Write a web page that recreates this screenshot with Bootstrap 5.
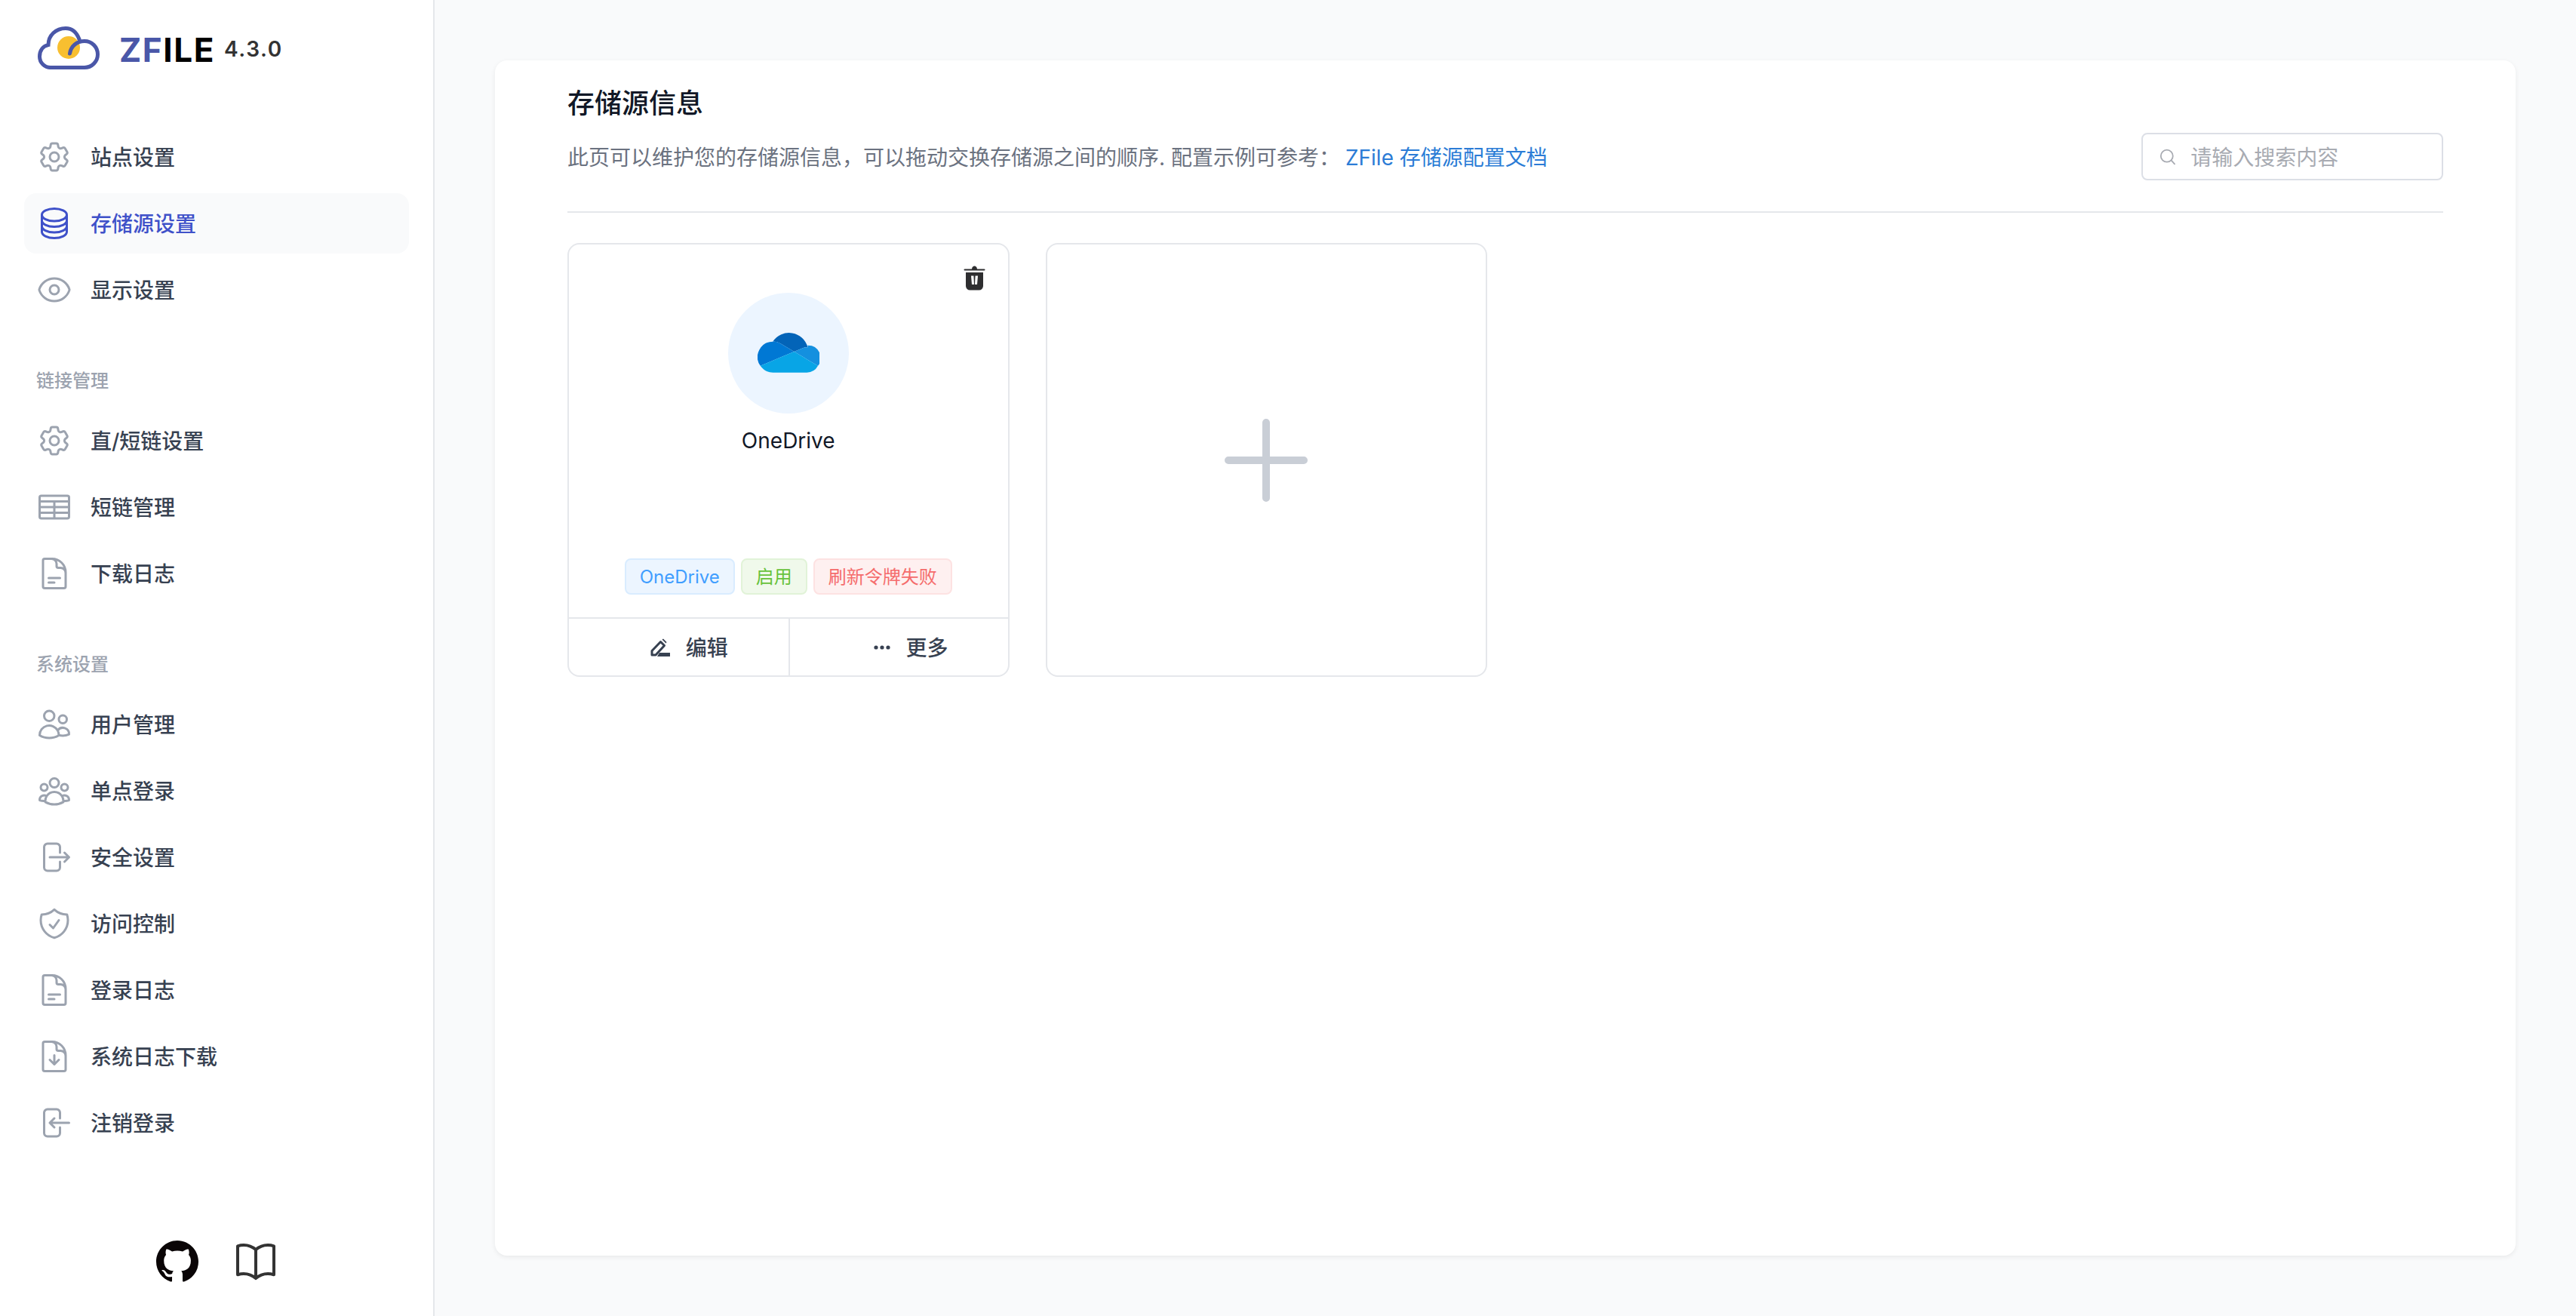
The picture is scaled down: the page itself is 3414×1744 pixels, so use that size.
<!DOCTYPE html>
<html lang="zh-CN">
<head>
<meta charset="utf-8">
<title>ZFile</title>
<link href="https://cdn.jsdelivr.net/npm/bootstrap@5.3.0/dist/css/bootstrap.min.css" rel="stylesheet">
<style>
html,body{height:100%;}
body{font-family:Inter,"Noto Sans CJK SC",sans-serif;background:#f9fafb;color:#111827;overflow:hidden;}
.app-shell{height:1744px;}
.side{width:576px;flex:none;background:#fff;border-right:2px solid #e5e7eb;padding:0 32px;}
.brand{height:168px;padding:35px 0 0 18px;align-items:flex-start;}
.brand-name{font-size:44px;font-weight:700;line-height:44px;letter-spacing:1.6px;color:#000;margin:9px 0 0 26px;}
.brand-name b{color:#4a57a8;font-weight:700;}
.brand-ver{font-size:28px;font-weight:600;line-height:44px;letter-spacing:1.6px;color:#333;margin:8px 0 0 12px;}
.menu-item{height:80px;margin-bottom:8px;padding:0 0 0 16px;gap:24px;border-radius:16px;font-size:28px;font-weight:500;color:#374151;text-decoration:none;}
.menu-item span{padding-top:2px;}
.menu-item svg{width:48px;height:48px;flex:none;color:#9ca3af;}
.menu-item.on{background:#f9fafb;color:#3f51c9;}
.menu-item.on svg{color:#3f51c9;}
.ico{fill:none;stroke:currentColor;stroke-width:1.5;stroke-linecap:round;stroke-linejoin:round;}
.group-label{height:40px;line-height:40px;margin:53px 0 19px;padding-left:16px;font-size:24px;font-weight:500;color:#9ca3af;}
.side-foot{margin-top:auto;height:64px;margin-bottom:40px;gap:44px;padding-left:4px;}
.book{width:64px;height:64px;color:#333;}
.panel-wrap{padding:80px;min-width:0;}
.panel{height:100%;background:#fff;border-radius:16px;box-shadow:0 2px 6px rgba(0,0,0,.07);padding:28px 96px 0;}
.head-row{padding-bottom:41px;border-bottom:2px solid #e5e7eb;margin-bottom:40px;}
.title{font-size:36px;font-weight:500;line-height:56px;margin:0 0 12px;padding-top:1px;height:56px;color:#111827;}
.sub-row{height:63px;font-size:28px;color:#6b7280;padding-top:2px;}
.doc-link{color:#2b7cd6;text-decoration:none;margin-left:7px;}
.search-box{position:absolute;right:0;top:68px;width:400px;height:63px;border:2px solid #dcdfe6;border-radius:8px;padding-left:22px;gap:20px;background:#fff;}
.search-box input{border:0;padding:2px 0 0;font-size:28px;color:#606266;box-shadow:none;background:transparent;}
.search-box input::placeholder{color:#a8abb2;}
.store-row{--bs-gutter-x:48px;}
.store{height:575px;border:2px solid #e5e7eb;border-radius:16px;background:#fff;--bs-card-bg:#fff;}
.store-del{position:absolute;top:28px;right:30px;width:29px;height:33px;}
.logo-disc{width:160px;height:160px;border-radius:50%;background:#ecf5ff;margin-top:64px;}
.store-name{font-size:28px;font-weight:400;line-height:40px;margin-top:16px;color:#111827;}
.tags{gap:8px;margin-top:auto;margin-bottom:30px;}
.tg{height:48px;line-height:46px;padding:0 18px;font-size:24px;border-width:2px;border-style:solid;border-radius:8px;font-weight:400;white-space:nowrap;}
.tg-blue{color:#409eff;background:#ecf5ff;border-color:#d9ecff;}
.tg-green{color:#67c23a;background:#f0f9eb;border-color:#e1f3d8;}
.tg-red{color:#f56c6c;background:#fef0f0;border-color:#fde2e2;}
.store-foot{height:77px;border-top:2px solid #e5e7eb;}
.act{width:50%;flex:none;gap:21px;font-size:28px;font-weight:500;color:#374151;padding-left:28px;}
.act span{padding-top:2px;}
.act+.act{border-left:2px solid #e5e7eb;padding-left:32px;}
.plus{position:relative;width:110px;height:110px;}
.plus svg{width:110px;height:110px;display:block;}
</style>
</head>
<body>
<div class="d-flex app-shell">
  <aside class="side d-flex flex-column">
    <div class="brand d-flex">
      <svg width="82" height="57" viewBox="0 0 82 57" fill="none"><circle cx="41" cy="28" r="15" fill="#f8bf30"/><path d="M17 54.5H62A17.5 17.5 0 0 0 79.5 37 17.5 17.5 0 0 0 62 19.5C52 19.5 44 26 42.5 36" stroke="#4a57a8" stroke-width="5" stroke-linecap="round"/><path d="M17 54.5A14.5 14.5 0 0 1 2.5 40C2.5 32 7 26 14 24.5 14 12 24 2.5 37 2.5 46 2.5 52 9 55 17" stroke="#4a57a8" stroke-width="5" stroke-linecap="round"/></svg>
      <span class="brand-name"><b>ZF</b>ILE</span>
      <span class="brand-ver">4.3.0</span>
    </div>
    <nav class="d-flex flex-column">
      <a class="menu-item d-flex align-items-center" href="#"><svg viewBox="0 0 24 24" class="ico"><path d="M9.594 3.94c.09-.542.56-.94 1.11-.94h2.593c.55 0 1.02.398 1.11.94l.213 1.281c.063.374.313.686.645.87.074.04.147.083.22.127.324.196.72.257 1.075.124l1.217-.456a1.125 1.125 0 011.37.49l1.296 2.247a1.125 1.125 0 01-.26 1.431l-1.003.827c-.293.24-.438.613-.431.992a6.759 6.759 0 010 .255c-.007.378.138.75.43.99l1.005.828c.424.35.534.954.26 1.43l-1.298 2.247a1.125 1.125 0 01-1.369.491l-1.217-.456c-.355-.133-.75-.072-1.076.124a6.57 6.57 0 01-.22.128c-.331.183-.581.495-.644.869l-.213 1.28c-.09.543-.56.941-1.11.941h-2.594c-.55 0-1.02-.398-1.11-.94l-.213-1.281c-.062-.374-.312-.686-.644-.87a6.52 6.52 0 01-.22-.127c-.325-.196-.72-.257-1.076-.124l-1.217.456a1.125 1.125 0 01-1.369-.49l-1.297-2.247a1.125 1.125 0 01.26-1.431l1.004-.827c.292-.24.437-.613.43-.992a6.932 6.932 0 010-.255c.007-.378-.138-.75-.43-.99l-1.004-.828a1.125 1.125 0 01-.26-1.43l1.297-2.247a1.125 1.125 0 011.37-.491l1.216.456c.356.133.751.072 1.076-.124.072-.044.146-.087.22-.128.332-.183.582-.495.644-.869l.214-1.281z"/><path d="M15 12a3 3 0 11-6 0 3 3 0 016 0z"/></svg><span>站点设置</span></a>
      <a class="menu-item on d-flex align-items-center" href="#"><svg viewBox="0 0 24 24" class="ico"><path d="M20.25 6.375c0 2.278-3.694 4.125-8.25 4.125S3.75 8.653 3.75 6.375m16.5 0c0-2.278-3.694-4.125-8.25-4.125S3.75 4.097 3.75 6.375m16.5 0v11.25c0 2.278-3.694 4.125-8.25 4.125s-8.25-1.847-8.25-4.125V6.375m16.5 0v3.75m-16.5-3.75v3.75m16.5 0v3.75C20.25 16.153 16.556 18 12 18s-8.25-1.847-8.25-4.125v-3.75m16.5 0c0 2.278-3.694 4.125-8.25 4.125s-8.25-1.847-8.25-4.125"/></svg><span>存储源设置</span></a>
      <a class="menu-item d-flex align-items-center" href="#"><svg viewBox="0 0 24 24" class="ico"><path d="M2.036 12.322a1.012 1.012 0 010-.639C3.423 7.51 7.36 4.5 12 4.5c4.638 0 8.573 3.007 9.963 7.178.07.207.07.431 0 .639C20.577 16.49 16.64 19.5 12 19.5c-4.638 0-8.573-3.007-9.964-7.178z"/><path d="M15 12a3 3 0 11-6 0 3 3 0 016 0z"/></svg><span>显示设置</span></a>

      <div class="group-label">链接管理</div>
      <a class="menu-item d-flex align-items-center" href="#"><svg viewBox="0 0 24 24" class="ico"><path d="M9.594 3.94c.09-.542.56-.94 1.11-.94h2.593c.55 0 1.02.398 1.11.94l.213 1.281c.063.374.313.686.645.87.074.04.147.083.22.127.324.196.72.257 1.075.124l1.217-.456a1.125 1.125 0 011.37.49l1.296 2.247a1.125 1.125 0 01-.26 1.431l-1.003.827c-.293.24-.438.613-.431.992a6.759 6.759 0 010 .255c-.007.378.138.75.43.99l1.005.828c.424.35.534.954.26 1.43l-1.298 2.247a1.125 1.125 0 01-1.369.491l-1.217-.456c-.355-.133-.75-.072-1.076.124a6.57 6.57 0 01-.22.128c-.331.183-.581.495-.644.869l-.213 1.28c-.09.543-.56.941-1.11.941h-2.594c-.55 0-1.02-.398-1.11-.94l-.213-1.281c-.062-.374-.312-.686-.644-.87a6.52 6.52 0 01-.22-.127c-.325-.196-.72-.257-1.076-.124l-1.217.456a1.125 1.125 0 01-1.369-.49l-1.297-2.247a1.125 1.125 0 01.26-1.431l1.004-.827c.292-.24.437-.613.43-.992a6.932 6.932 0 010-.255c.007-.378-.138-.75-.43-.99l-1.004-.828a1.125 1.125 0 01-.26-1.43l1.297-2.247a1.125 1.125 0 011.37-.491l1.216.456c.356.133.751.072 1.076-.124.072-.044.146-.087.22-.128.332-.183.582-.495.644-.869l.214-1.281z"/><path d="M15 12a3 3 0 11-6 0 3 3 0 016 0z"/></svg><span>直/短链设置</span></a>
      <a class="menu-item d-flex align-items-center" href="#"><svg viewBox="0 0 24 24" class="ico"><path d="M3.375 4.5h17.25c.621 0 1.125.504 1.125 1.125v12.75c0 .621-.504 1.125-1.125 1.125H3.375a1.125 1.125 0 01-1.125-1.125V5.625c0-.621.504-1.125 1.125-1.125zM2.25 8.25h19.5M2.25 12h19.5M2.25 15.75h19.5M12 8.25v11.25"/></svg><span>短链管理</span></a>
      <a class="menu-item d-flex align-items-center" href="#"><svg viewBox="0 0 24 24" class="ico"><path d="M19.5 14.25v-2.625a3.375 3.375 0 00-3.375-3.375h-1.5A1.125 1.125 0 0113.5 7.125v-1.5a3.375 3.375 0 00-3.375-3.375H8.25m0 12.75h7.5m-7.5 3H12M10.5 2.25H5.625c-.621 0-1.125.504-1.125 1.125v17.25c0 .621.504 1.125 1.125 1.125h12.75c.621 0 1.125-.504 1.125-1.125V11.25a9 9 0 00-9-9z"/></svg><span>下载日志</span></a>

      <div class="group-label">系统设置</div>
      <a class="menu-item d-flex align-items-center" href="#"><svg viewBox="0 0 24 24" class="ico"><path d="M15 19.128a9.38 9.38 0 002.625.372 9.337 9.337 0 004.121-.952 4.125 4.125 0 00-7.533-2.493M15 19.128v-.003c0-1.113-.285-2.16-.786-3.07M15 19.128v.106A12.318 12.318 0 018.624 21c-2.331 0-4.512-.645-6.374-1.766l-.001-.109a6.375 6.375 0 0111.964-3.07M12 6.375a3.375 3.375 0 11-6.75 0 3.375 3.375 0 016.75 0zm8.25 2.25a2.625 2.625 0 11-5.25 0 2.625 2.625 0 015.25 0z"/></svg><span>用户管理</span></a>
      <a class="menu-item d-flex align-items-center" href="#"><svg viewBox="0 0 24 24" class="ico"><path d="M18 18.72a9.094 9.094 0 003.741-.479 3 3 0 00-4.682-2.72m.94 3.198l.001.031c0 .225-.012.447-.037.666A11.944 11.944 0 0112 21c-2.17 0-4.207-.576-5.963-1.584A6.062 6.062 0 016 18.719m12 0a5.971 5.971 0 00-.941-3.197m0 0A5.995 5.995 0 0012 12.75a5.995 5.995 0 00-5.058 2.772m0 0a3 3 0 00-4.681 2.72 8.986 8.986 0 003.74.477m.94-3.197a5.971 5.971 0 00-.94 3.197M15 6.75a3 3 0 11-6 0 3 3 0 016 0zm6 3a2.25 2.25 0 11-4.5 0 2.25 2.25 0 014.5 0zm-13.5 0a2.25 2.25 0 11-4.5 0 2.25 2.25 0 014.5 0z"/></svg><span>单点登录</span></a>
      <a class="menu-item d-flex align-items-center" href="#"><svg viewBox="0 0 24 24" class="ico"><path d="M15.75 9V5.25A2.25 2.25 0 0013.5 3h-6a2.25 2.25 0 00-2.25 2.25v13.5A2.25 2.25 0 007.5 21h6a2.25 2.25 0 002.25-2.25V15m3 0l3-3m0 0l-3-3m3 3H9"/></svg><span>安全设置</span></a>
      <a class="menu-item d-flex align-items-center" href="#"><svg viewBox="0 0 24 24" class="ico"><path d="M9 12.75L11.25 15 15 9.75m-3-7.036A11.959 11.959 0 013.598 6 11.99 11.99 0 003 9.749c0 5.592 3.824 10.29 9 11.623 5.176-1.332 9-6.03 9-11.622 0-1.31-.21-2.571-.598-3.751h-.152c-3.196 0-6.1-1.248-8.25-3.285z"/></svg><span>访问控制</span></a>
      <a class="menu-item d-flex align-items-center" href="#"><svg viewBox="0 0 24 24" class="ico"><path d="M19.5 14.25v-2.625a3.375 3.375 0 00-3.375-3.375h-1.5A1.125 1.125 0 0113.5 7.125v-1.5a3.375 3.375 0 00-3.375-3.375H8.25m0 12.75h7.5m-7.5 3H12M10.5 2.25H5.625c-.621 0-1.125.504-1.125 1.125v17.25c0 .621.504 1.125 1.125 1.125h12.75c.621 0 1.125-.504 1.125-1.125V11.25a9 9 0 00-9-9z"/></svg><span>登录日志</span></a>
      <a class="menu-item d-flex align-items-center" href="#"><svg viewBox="0 0 24 24" class="ico"><path d="M19.5 14.25v-2.625a3.375 3.375 0 00-3.375-3.375h-1.5A1.125 1.125 0 0113.5 7.125v-1.5a3.375 3.375 0 00-3.375-3.375H8.25m.75 12l3 3m0 0l3-3m-3 3v-6m-1.5-9H5.625c-.621 0-1.125.504-1.125 1.125v17.25c0 .621.504 1.125 1.125 1.125h12.75c.621 0 1.125-.504 1.125-1.125V11.25a9 9 0 00-9-9z"/></svg><span>系统日志下载</span></a>
      <a class="menu-item d-flex align-items-center" href="#"><svg viewBox="0 0 24 24" class="ico"><path d="M15.75 9V5.25A2.25 2.25 0 0013.5 3h-6a2.25 2.25 0 00-2.25 2.25v13.5A2.25 2.25 0 007.5 21h6a2.25 2.25 0 002.25-2.25V15M12 9l-3 3m0 0l3 3m-3-3h12.75"/></svg><span>注销登录</span></a>
    </nav>
    <div class="side-foot d-flex justify-content-center align-items-center">
      <svg width="56" height="56" viewBox="0 0 16 16" fill="#0a0506"><path d="M8 0C3.58 0 0 3.58 0 8c0 3.54 2.29 6.53 5.47 7.59.4.07.55-.17.55-.38 0-.19-.01-.82-.01-1.49-2.01.37-2.53-.49-2.69-.94-.09-.23-.48-.94-.82-1.13-.28-.15-.68-.52-.01-.53.63-.01 1.08.58 1.23.82.72 1.21 1.87.87 2.33.66.07-.52.28-.87.51-1.07-1.78-.2-3.64-.89-3.64-3.95 0-.87.31-1.59.82-2.15-.08-.2-.36-1.02.08-2.12 0 0 .67-.21 2.2.82.64-.18 1.32-.27 2-.27.68 0 1.36.09 2 .27 1.53-1.04 2.2-.82 2.2-.82.44 1.1.16 1.92.08 2.12.51.56.82 1.27.82 2.15 0 3.07-1.87 3.75-3.65 3.95.29.25.54.73.54 1.48 0 1.07-.01 1.93-.01 2.2 0 .21.15.46.55.38A8.013 8.013 0 0016 8c0-4.42-3.58-8-8-8z"/></svg>
      <svg viewBox="0 0 24 24" class="ico book"><path d="M12 6.042A8.967 8.967 0 006 3.75c-1.052 0-2.062.18-3 .512v14.25A8.987 8.987 0 016 18c2.305 0 4.408.867 6 2.292m0-14.25a8.966 8.966 0 016-2.292c1.052 0 2.062.18 3 .512v14.25A8.987 8.987 0 0018 18a8.967 8.967 0 00-6 2.292m0-14.25v14.25"/></svg>
    </div>
  </aside>

  <main class="panel-wrap flex-grow-1">
    <section class="panel">
      <div class="head-row position-relative">
        <h1 class="title">存储源信息</h1>
        <div class="sub-row d-flex align-items-center"><span>此页可以维护您的存储源信息，可以拖动交换存储源之间的顺序. 配置示例可参考：</span><a class="doc-link" href="#">ZFile 存储源配置文档</a></div>
        <div class="search-box d-flex align-items-center">
          <svg width="24" height="24" viewBox="0 0 24 24" fill="none" stroke="#a8abb2" stroke-width="2" stroke-linecap="round"><circle cx="11" cy="10.500" r="9"/><path d="M17.500 17l5 5.500"/></svg>
          <input class="form-control" type="text" placeholder="请输入搜索内容">
        </div>
      </div>
      <div class="row store-row">
        <div class="col-3">
          <div class="card store position-relative align-items-stretch">
            <svg class="store-del" viewBox="0 0 29 33"><path d="M11 4.500C11.300 1.500 13 .5 14.500 .5S17.700 1.500 18 4.500H27.500a1 1 0 010 2H1.500a1 1 0 010-2z" fill="#2e2e30"/><path fill-rule="evenodd" d="M3 9H26V27a5.500 5.500 0 01-5.500 5.500h-12A5.500 5.500 0 013 27zM10 13.500l1 11.500h3l-.6-11.500zM15.600 13.500L15 25h3l1-11.500z" fill="#2e2e30"/></svg>
            <div class="d-flex flex-column align-items-center flex-grow-1">
              <div class="logo-disc d-flex align-items-center justify-content-center">
                <svg width="82" height="82" viewBox="0 0 32 32"><path d="M12.20245 11.19292l.00031-.0011 6.71765 4.02379 4.00293-1.68451.00018.00068A6.4768 6.4768 0 0 1 25.5 13c.14764 0 .29358.0067.43878.01639a10.00075 10.00075 0 0 0-18.041-3.01381C7.932 10.00215 7.9657 10 8 10a7.96073 7.96073 0 0 1 4.20245 1.19292z" fill="#0364b8"/><path d="M12.20276 11.19182l-.00031.0011A7.96073 7.96073 0 0 0 8 10c-.0343 0-.06805.00215-.10223.00258A7.99676 7.99676 0 0 0 1.43732 22.57277l5.924-2.49292 2.63342-1.10819 5.86353-2.46746 3.06213-1.28859z" fill="#0078d4"/><path d="M25.93878 13.01639C25.79358 13.0067 25.64764 13 25.5 13a6.4768 6.4768 0 0 0-2.57648.53178l-.00018-.00068-4.00293 1.68451 1.16077.69528L23.88611 18.19l1.66009.99438 5.67633 3.40007a6.5002 6.5002 0 0 0-5.28375-10.56805z" fill="#1490df"/><path d="M25.5462 19.18437l-1.66009-.99438-3.80493-2.2791-1.16077-.69528-3.06213 1.28859-5.86353 2.46746-2.63342 1.10819-5.924 2.49292A7.98889 7.98889 0 0 0 8 26h17.5a6.49837 6.49837 0 0 0 5.72253-3.41556z" fill="#08a5e6"/></svg>
              </div>
              <div class="store-name">OneDrive</div>
              <div class="tags d-flex justify-content-center">
                <span class="tg tg-blue">OneDrive</span>
                <span class="tg tg-green">启用</span>
                <span class="tg tg-red">刷新令牌失败</span>
              </div>
            </div>
            <div class="store-foot d-flex">
              <div class="act d-flex align-items-center justify-content-center">
                <svg width="26" height="24" viewBox="0 0 26 24" fill="none"><path d="M2 22V16.500L13.500 4.500 18.500 9.500 7 22z" stroke="#374151" stroke-width="3" stroke-linejoin="round"/><path d="M15.500 1.500L17 .5l4.500 4.500-1 1.500z" fill="#374151"/><path d="M12 19h14v5H9z" fill="#374151"/></svg>
                <span>编辑</span>
              </div>
              <div class="act d-flex align-items-center justify-content-center">
                <svg width="22" height="6" viewBox="0 0 22 6" fill="#374151"><circle cx="3" cy="3" r="2.600"/><circle cx="11" cy="3" r="2.600"/><circle cx="19" cy="3" r="2.600"/></svg>
                <span>更多</span>
              </div>
            </div>
          </div>
        </div>
        <div class="col-3">
          <div class="card store d-flex align-items-center justify-content-center">
            <div class="plus"><svg viewBox="0 0 110 110"><path d="M55 5V105M5 55H105" stroke="#c9ced6" stroke-width="10" stroke-linecap="round"/></svg></div>
          </div>
        </div>
      </div>
    </section>
  </main>
</div>
<script src="https://cdn.jsdelivr.net/npm/bootstrap@5.3.0/dist/js/bootstrap.bundle.min.js"></script>
</body>
</html>
